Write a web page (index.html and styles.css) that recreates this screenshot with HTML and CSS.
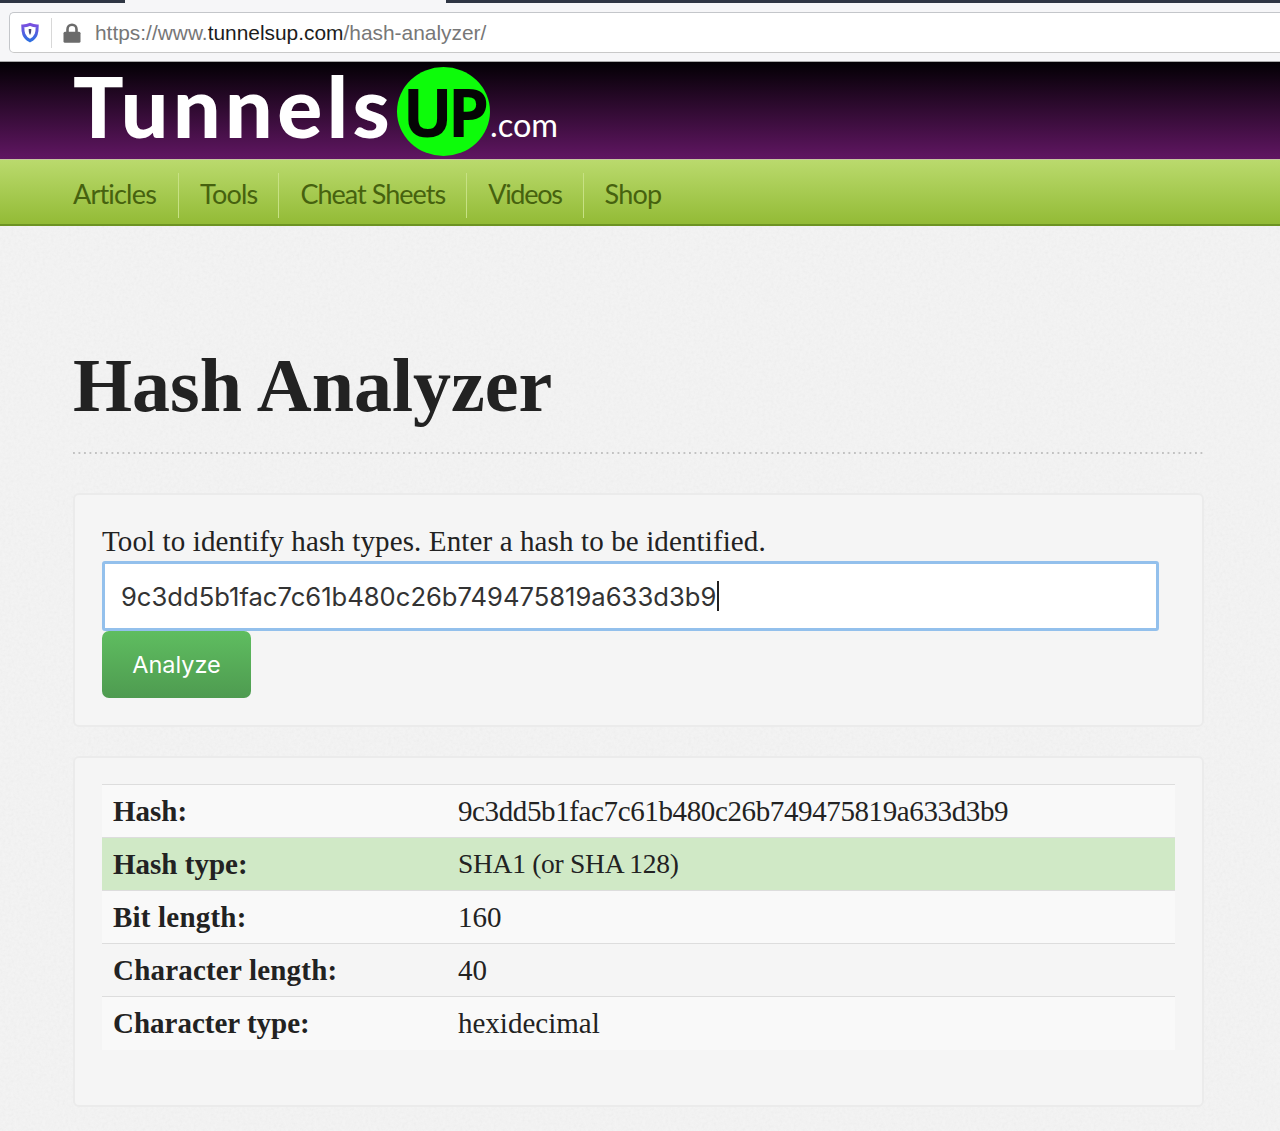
FILE: index.html
```html
<!DOCTYPE html>
<html lang="en">
<head>
<meta charset="utf-8">
<title>Hash Analyzer</title>
<link rel="stylesheet" href="styles.css">
</head>
<body>
<div class="tabs"><span class="tab-dark tab-a"></span><span class="tab-light"></span><span class="tab-dark tab-b"></span></div>
<div class="chrome">
  <div class="urlbar">
    <svg class="shield" viewBox="0 0 18 20" width="18" height="21"><defs><linearGradient id="sg" x1="0" y1="0" x2="0" y2="1"><stop offset="0" stop-color="#7a4fe0"/><stop offset="1" stop-color="#2f6fe0"/></linearGradient></defs><path d="M9 1.800C6.700 2.900 4.300 3.400 1.800 3.400c0 6.300.4 11.300 7.200 14.800 6.800-3.500 7.200-8.500 7.200-14.800-2.500 0-4.900-.5-7.200-1.600z" fill="#fff" stroke="url(#sg)" stroke-width="3"/><path d="M7.700 6.500h2.600c0 2.600-.2 4.300-1.300 6-1.100-1.700-1.300-3.400-1.300-6z" fill="#4a4a78"/></svg>
    <span class="divider"></span>
    <svg class="lock" viewBox="0 0 18 20" width="18" height="20"><path d="M4.500 9V6.200a4.500 4.500 0 0 1 9 0V9" fill="none" stroke="#6b6b6b" stroke-width="2.600"/><rect x="0.500" y="8.800" width="17" height="11" rx="1.500" fill="#6b6b6b"/></svg>
    <span class="url">https://www.<b>tunnelsup.com</b>/hash-analyzer/</span>
  </div>
</div>
<header class="masthead">
  <div class="logo"><span class="logo-name">Tunnels</span><span class="logo-up">UP</span><span class="logo-com">.com</span></div>
</header>
<nav class="nav">
  <a class="nav-item">Articles</a>
  <a class="nav-item">Tools</a>
  <a class="nav-item nav-cheat">Cheat Sheets</a>
  <a class="nav-item nav-videos">Videos</a>
  <a class="nav-item">Shop</a>
</nav>
<main class="content">
  <h1 class="title">Hash Analyzer</h1>
  <section class="well well-form">
    <p class="intro">Tool to identify hash types. Enter a hash to be identified.</p>
    <div class="hash-input"><span>9c3dd5b1fac7c61b480c26b749475819a633d3b9</span><i class="caret"></i></div>
    <button class="analyze" type="button">Analyze</button>
  </section>
  <section class="well well-table">
    <table class="result">
      <tr><th>Hash:</th><td class="val-hash">9c3dd5b1fac7c61b480c26b749475819a633d3b9</td></tr>
      <tr class="success"><th>Hash type:</th><td class="val-type">SHA1 (or SHA 128)</td></tr>
      <tr><th class="key-length">Bit length:</th><td>160</td></tr>
      <tr class="even"><th class="key-length">Character length:</th><td>40</td></tr>
      <tr><th>Character type:</th><td>hexidecimal</td></tr>
    </table>
  </section>
</main>
</body>
</html>
```
FILE: styles.css
```css
* { box-sizing: border-box; }
html, body { margin: 0; padding: 0; }
body { width: 1280px; height: 1131px; overflow: hidden; background-color: #f3f3f3; background-image: url("data:image/svg+xml;utf8,<svg xmlns='http://www.w3.org/2000/svg' width='300' height='300'><filter id='n'><feTurbulence type='fractalNoise' baseFrequency='0.35' numOctaves='2' stitchTiles='stitch'/><feColorMatrix values='0 0 0 0 0.6 0 0 0 0 0.6 0 0 0 0 0.6 0 0 0 0.22 -0.07'/></filter><rect width='300' height='300' filter='url(%23n)'/></svg>"); font-family: "Liberation Serif", serif; color: #222; }

.tabs { display: flex; height: 3px; background: #f6f6f8; }
.tab-dark { background: #2f3644; height: 3px; }
.tab-a { width: 125px; }
.tab-light { width: 321px; }
.tab-b { flex: 1; }

.chrome { height: 59px; background: #f6f6f8; padding: 9px 0 0 9px; border-bottom: 1px solid #a9a9a9; }
.urlbar { display: flex; align-items: center; height: 41px; background: #fff; border: 1px solid #c4c6ca; border-right: 0; border-bottom-color: #c9c9c9; border-radius: 5px 0 0 5px; font-family: "Liberation Sans", sans-serif; }
.shield { margin-left: 11px; }
.divider { width: 1px; height: 30px; background: #d8d8d8; margin-left: 12px; }
.lock { margin-left: 11px; }
.url { margin-left: 14px; font-size: 20.9px; color: #777; }
.url b { font-weight: 400; color: #1c1c1c; }

.masthead { height: 97px; padding-left: 73px; background: linear-gradient(#030004, #601662); }
.logo { height: 97px; position: relative; }
.logo-name { display: block; font-family: Lato, sans-serif; font-weight: 900; font-size: 84px; line-height: 97px; height: 97px; color: #fff; letter-spacing: 4.5px; position: relative; top: -5px; }
.logo-up { position: absolute; left: 324px; top: 5px; width: 93px; height: 89px; border-radius: 50%; background: #0dfc0a; color: #050505; font-family: "Open Sans", sans-serif; font-weight: 700; font-size: 66px; line-height: 89px; text-align: center; letter-spacing: -5px; }
.logo-com { position: absolute; left: 417px; top: 41px; font-family: Lato, sans-serif; font-size: 32.5px; line-height: 44px; color: #fff; }

.nav { display: flex; height: 67px; padding: 13px 0 8px 73px; background: linear-gradient(#bada6d, #93bb36); border-top: 1px solid #c6c8a0; border-bottom: 2px solid #6d9323; }
.nav-item { display: block; padding: 0 21px; height: 45px; font-family: Lato, sans-serif; font-size: 27px; letter-spacing: -0.8px; line-height: 42px; color: #46620f; border-right: 1px solid #c7e184; white-space: nowrap; }
.nav-item:first-child { padding: 0 22px 0 0; }
.nav-item:last-child { border-right: 0; }
.nav-cheat { letter-spacing: -0.97px; }
.nav-videos { letter-spacing: -1.3px; }

.content { padding: 0 76px 0 73px; }
.title { margin: 0; height: 228px; padding-top: 114px; background: linear-gradient(to right, #c2c2c2 2px, transparent 2px) left bottom / 5.5px 2px repeat-x; font-size: 76px; line-height: 90px; font-weight: 700; color: #222; }
.well { background: #f5f5f5; border: 2px solid #ebebeb; border-radius: 6px; padding: 0 27px; width: 1131px; }
.well-form { margin-top: 39px; height: 234px; padding-top: 27px; }
.intro { margin: 0 0 1px; font-size: 29px; letter-spacing: 0.12px; line-height: 38px; color: #222; }
.hash-input { display: flex; align-items: center; width: 1057px; height: 70px; padding-left: 16px; background: #fff; border: 3px solid #93c0ec; border-radius: 3px; font-family: Inter, sans-serif; font-size: 25.6px; color: #333; }
.caret { display: block; width: 2px; height: 30px; background: #222; margin-left: 1px; }
.analyze { display: block; width: 149px; height: 67px; border: 0; border-radius: 7px; background: linear-gradient(#5fbd60, #4e9b50); color: #fff; font-family: Inter, sans-serif; font-size: 23.5px; padding: 0; }
.well-table { margin-top: 29px; height: 351px; padding-top: 26px; }
.result { width: 1073px; border-collapse: collapse; font-size: 29px; color: #222; table-layout: fixed; }
.result tr { height: 53px; background: #f9f9f9; border-top: 1px solid #ddd; }
.result tr.even { background: #f5f5f5; }
.result tr.success { background: #d0e9c6; }
.result th { width: 345px; padding: 0 0 0 11px; text-align: left; font-weight: 700; }
.result th.key-length { letter-spacing: 0.2px; }
.result td { padding: 0 0 0 11px; }
.result .val-hash { letter-spacing: -0.38px; }
.result .val-type { font-size: 27.5px; letter-spacing: -0.28px; }
```
